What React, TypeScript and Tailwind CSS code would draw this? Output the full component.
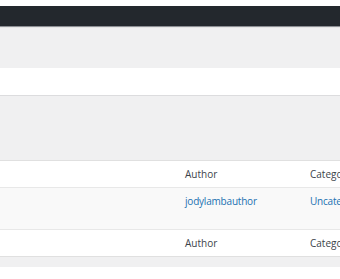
import React from 'react'

// WP admin posts list fragment, cropped
const font = { fontFamily: '"Open Sans", "Noto Sans", sans-serif' }

const HeaderRow = () => (
  <div className="flex h-[26px] items-center bg-white text-[10px] text-[#3c434a]">
    <div className="w-[185px] shrink-0" />
    <div className="w-[125px] shrink-0">Author</div>
    <div className="whitespace-nowrap">Categories</div>
  </div>
)

export default function App() {
  return (
    <div className="h-[279px] w-[340px] overflow-hidden bg-white" style={font}>
      <div className="h-[6px] bg-white" />
      {/* admin bar */}
      <div className="h-[20px] bg-[#23282d]" />
      <div className="h-px bg-[#8c8f94]" />
      <div className="h-[41px] border-t border-[#e5e5e5] bg-[#f0f0f1]" />
      {/* search / tablenav */}
      <div className="h-[27px] bg-white" />
      <div className="h-[65px] border-t border-[#dcdcde] bg-[#f0f0f1]" />
      {/* table */}
      <div className="border-y border-[#e0e0e0]">
        <HeaderRow />
        <div className="flex h-[43px] border-y border-[#e8e8e8] bg-[#f9f9f9] pt-[6px] text-[10px] tracking-[-0.2px] text-[#2271b1]">
          <div className="w-[185px] shrink-0" />
          <div className="w-[125px] shrink-0">jodylambauthor</div>
          <div className="whitespace-nowrap">Uncategorized</div>
        </div>
        <HeaderRow />
      </div>
      <div className="h-[10px] bg-[#f0f0f1]" />
    </div>
  )
}
